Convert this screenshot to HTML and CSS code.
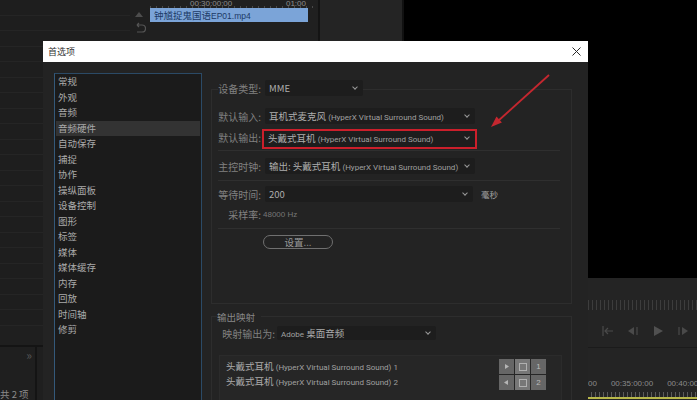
FILE: index.html
```html
<!DOCTYPE html>
<html lang="en">
<head>
    <meta charset="UTF-8">
    <meta name="viewport" content="width=device-width, initial-scale=1.0">
    <title>首选项</title>
    <link rel="stylesheet" href="styles.css">
</head>
<body>
    <div class="app">
        <div class="left-panel">
            <div class="left-top">
                <div class="rows">
                    <div class="row"></div><div class="row"></div><div class="row"></div><div class="row"></div>
                    <div class="row"></div><div class="row"></div><div class="row"></div><div class="row"></div>
                    <div class="row"></div><div class="row"></div><div class="row"></div><div class="row"></div>
                    <div class="row"></div><div class="row"></div><div class="row"></div><div class="row"></div>
                    <div class="row"></div><div class="row"></div><div class="row"></div><div class="row"></div>
                    <div class="row"></div>
                </div>
                <div class="tools">
                    <svg width="10" height="6" viewBox="0 0 10 6"><path d="M5 0L9 5H1Z" fill="#4d4d4d"/></svg>
                    <svg width="12" height="12" viewBox="0 0 12 12"><path d="M3 3h5a3 3 0 0 1 0 7H3M3 3l2-2M3 3l2 2" stroke="#555" stroke-width="1.2" fill="none"/></svg>
                </div>
            </div>
            <div class="left-foot">
                <span class="chev">»</span>
                <span class="count">共 2 项</span>
            </div>
        </div>
        <div class="timeline">
            <div class="track-area">
                <div class="time-ruler"><span>00:30:00:00</span><span>01:00</span></div>
                <div class="clip"><span>钟馗捉鬼国语</span><span class="clip-en">EP01.mp4</span></div>
            </div>
            <div class="track-side"></div>
        </div>
        <div class="monitor">
            <div class="video"></div>
            <div class="monitor-bottom">
                <div class="ticks"></div>
                <div class="transport">
                    <svg width="12" height="10" viewBox="0 0 12 10"><path d="M1 0v10M3 5h8M6 2L3 5l3 3" stroke="#4a4a4a" stroke-width="1.2" fill="none"/></svg>
                    <svg width="12" height="10" viewBox="0 0 12 10"><path d="M7 1v8L1 5Z" fill="#4a4a4a"/><path d="M10 1v8" stroke="#4a4a4a" stroke-width="1.2"/></svg>
                    <svg width="12" height="10" viewBox="0 0 12 10"><path d="M2 0v10l9-5Z" fill="#505050"/></svg>
                    <svg width="12" height="10" viewBox="0 0 12 10"><path d="M2 1v8" stroke="#4a4a4a" stroke-width="1.2"/><path d="M5 1v8l6-4Z" fill="#4a4a4a"/></svg>
                </div>
                <div class="times"><span>00</span><span>00:35:00:00</span><span>00:40:00</span></div>
                <div class="bottom-ticks"></div>
                <div class="yellow"></div>
            </div>
        </div>

        <div class="dialog">
            <div class="title-bar">
                <span>首选项</span>
                <svg width="9" height="9" viewBox="0 0 9 9"><path d="M0.5 0.5l8 8M8.5 0.5l-8 8" stroke="#2a2a2a" stroke-width="1" fill="none"/></svg>
            </div>
            <div class="dialog-body">
                <ul class="side-list">
                    <li>常规</li><li>外观</li><li>音频</li><li class="selected">音频硬件</li><li>自动保存</li>
                    <li>捕捉</li><li>协作</li><li>操纵面板</li><li>设备控制</li><li>图形</li>
                    <li>标签</li><li>媒体</li><li>媒体缓存</li><li>内存</li><li>回放</li>
                    <li>时间轴</li><li>修剪</li>
                </ul>
                <div class="content">
                    <div class="group">
                        <div class="form-row device-type">
                            <label>设备类型:</label>
                            <div class="select select-short"><span>MME</span><i class="caret"></i></div>
                        </div>
                        <div class="form-row row-input">
                            <label>默认输入:</label>
                            <div class="select"><span>耳机式麦克风 <em>(HyperX Virtual Surround Sound)</em></span><i class="caret"></i></div>
                        </div>
                        <div class="form-row row-output">
                            <label>默认输出:</label>
                            <div class="select highlighted"><span>头戴式耳机 <em>(HyperX Virtual Surround Sound)</em></span><i class="caret"></i></div>
                        </div>
                        <div class="divider divider-first"></div>
                        <div class="form-row">
                            <label>主控时钟:</label>
                            <div class="select"><span>输出: 头戴式耳机 <em>(HyperX Virtual Surround Sound)</em></span><i class="caret"></i></div>
                        </div>
                        <div class="divider"></div>
                        <div class="form-row">
                            <label>等待时间:</label>
                            <div class="select select-latency"><span>200</span><i class="caret"></i></div>
                            <span class="unit">毫秒</span>
                        </div>
                        <div class="form-row rate-row">
                            <label>采样率:</label>
                            <span class="rate">48000 Hz</span>
                        </div>
                        <div class="divider divider-last"></div>
                        <button class="settings-btn">设置...</button>
                    </div>
                    <div class="map-group">
                        <div class="map-title">输出映射</div>
                        <div class="form-row map-row">
                            <label>映射输出为:</label>
                            <div class="select select-map"><span><em>Adobe</em> 桌面音频</span><i class="caret"></i></div>
                        </div>
                        <div class="map-box">
                            <div class="map-names">
                                <div>头戴式耳机 <em>(HyperX Virtual Surround Sound) 1</em></div>
                                <div>头戴式耳机 <em>(HyperX Virtual Surround Sound) 2</em></div>
                            </div>
                            <div class="map-grid">
                                <div class="cell"><svg width="7" height="7" viewBox="0 0 7 7"><path d="M2 1v5l4-2.5Z" fill="#b5b5b5"/></svg></div>
                                <div class="cell cell-light"><b class="sq"></b></div>
                                <div class="cell">1</div>
                                <div class="cell"><svg width="7" height="7" viewBox="0 0 7 7"><path d="M5 1v5L1 3.500Z" fill="#b5b5b5"/></svg></div>
                                <div class="cell cell-light"><b class="sq"></b></div>
                                <div class="cell">2</div>
                            </div>
                        </div>
                    </div>
                </div>
            </div>
        </div>

        <svg class="arrow" width="70" height="62" viewBox="0 0 70 62">
            <path d="M64 5L13 51" stroke="#c4272f" stroke-width="1.8" fill="none"/>
            <path d="M6 57L11.500 46.600L16.900 52.600Z" fill="#c4272f"/>
        </svg>
    </div>
</body>
</html>
```

FILE: styles.css
```css
* {
    box-sizing: border-box;
}
body {
    margin: 0;
    background-color: #000;
    font-family: "Noto Sans CJK SC", "Liberation Sans", sans-serif;
}
.app {
    position: relative;
    width: 697px;
    height: 400px;
    overflow: hidden;
    display: grid;
    grid-template-columns: 150px 254px 293px;
    background-color: #000;
}

/* panels behind the dialog */
.left-panel {
    background-color: #1f1f1f;
    display: flex;
    flex-direction: column;
}
.left-top {
    height: 347px;
    display: flex;
    border-bottom: 2px solid #141414;
}
.rows {
    width: 130px;
    height: 328px;
    overflow: hidden;
}
.row {
    height: 15.5px;
    border-bottom: 1px solid #252525;
    background-color: #1e1e1e;
}
.tools {
    flex: 1;
    display: flex;
    flex-direction: column;
    align-items: flex-start;
    gap: 4px;
    padding-top: 12px;
    padding-left: 4px;
}
.left-foot {
    flex: 1;
    width: 37px;
    border-right: 2px solid #141414;
    display: flex;
    flex-direction: column;
    justify-content: space-between;
    color: #8a8a8a;
    font-size: 9.5px;
    white-space: nowrap;
}
.chev {
    align-self: flex-end;
    padding-right: 3px;
    font-size: 12px;
    line-height: 16px;
    color: #555;
}
.count {
    line-height: 12px;
}
.timeline {
    display: flex;
    border-right: 2px solid #111;
    background-color: #202020;
}
.track-area {
    width: 170px;
    border-right: 2px solid #141414;
}
.track-side {
    flex: 1;
    background-color: #242424;
}
.time-ruler {
    height: 8px;
    display: flex;
    justify-content: space-between;
    padding: 0 12px 0 40px;
    font: 8px/7px "Liberation Sans", sans-serif;
    color: #8c8c8c;
    background: repeating-linear-gradient(90deg, #4a4a4a 0 1px, transparent 1px 6px) 0 6px / 100% 2px no-repeat;
}
.clip {
    width: 158px;
    height: 14px;
    background-color: #7ba4d8;
    color: #1c3a66;
    font-size: 9.5px;
    line-height: 14px;
    padding-left: 4px;
    white-space: nowrap;
}
.clip-en {
    font: 8.5px "Liberation Sans", sans-serif;
}
.monitor {
    display: flex;
    flex-direction: column;
}
.video {
    height: 278px;
    background-color: #000;
}
.monitor-bottom {
    flex: 1;
    background-color: #242424;
    display: flex;
    flex-direction: column;
}
.ticks {
    height: 10px;
    margin-top: 22px;
    background: repeating-linear-gradient(90deg, #3d3d3d 0 1px, transparent 1px 4px);
}
.transport {
    height: 38px;
    padding: 4px 0 0 198px;
    display: flex;
    gap: 13px;
    align-items: center;
    border-bottom: 1px solid #1b1b1b;
}
.times {
    height: 13px;
    margin-top: 29px;
    padding-left: 184px;
    display: flex;
    gap: 14px;
    font: 8px/13px "Liberation Sans", sans-serif;
    color: #8b8b8b;
    white-space: nowrap;
}
.bottom-ticks {
    height: 5px;
    margin: 2px 0 0 183px;
    background: repeating-linear-gradient(90deg, #5a5a5a 0 1px, transparent 1px 4px);
}
.yellow {
    height: 2px;
    margin-left: 183px;
    background-color: #b8b84a;
}

/* dialog floats over the panels */
.dialog {
    position: absolute;
    left: 43px;
    top: 41px;
    width: 545px;
    height: 359px;
    background-color: #232323;
}
.title-bar {
    height: 21px;
    background-color: #fff;
    color: #333;
    font-size: 9px;
    display: flex;
    align-items: center;
    justify-content: space-between;
    padding: 0 7px 0 5px;
}
.dialog-body {
    display: flex;
    padding: 11px 16px 0 11px;
    gap: 9px;
}
.side-list {
    list-style: none;
    margin: 0;
    padding: 0 1px;
    width: 148px;
    height: 330px;
    background-color: #1b1b1b;
    border: 1px solid #2b4a66;
    border-left-color: #34597a;
    color: #aaa;
    font-size: 9.5px;
}
.side-list li {
    height: 15.5px;
    line-height: 15.5px;
    padding-left: 2px;
}
.side-list li.selected {
    background-color: #333;
}
.content {
    flex: 1;
    padding-top: 16px;
    font-size: 9.5px;
    color: #9a9a9a;
}
.group {
    height: 215px;
    border: 1px solid #2d2d2d;
    padding: 0 11px 0 6px;
}
.form-row {
    display: flex;
    align-items: center;
    height: 18px;
}
.form-row label {
    width: 43px;
    white-space: nowrap;
    text-align: right;
    color: #808080;
    font-size: 10px;
    margin-right: 4px;
}
.device-type {
    margin-top: -11px;
    width: fit-content;
    background-color: #232323;
}
.row-input {
    margin-top: 10px;
}
.row-output {
    margin-top: 4px;
    height: 20px;
    padding-bottom: 3px;
}
.select {
    width: 210px;
    height: 16px;
    background-color: #1d1d1d;
    color: #adadad;
    display: flex;
    align-items: center;
    justify-content: space-between;
    padding: 0 6px 0 4px;
    white-space: nowrap;
    border-radius: 2px;
}
.select-short {
    width: 98px;
}
.select-latency {
    width: 208px;
}
.select em,
.map-names em {
    font: normal 8px Roboto, "Liberation Sans", sans-serif;
    color: #a0a0a0;
}
.caret {
    width: 4px;
    height: 4px;
    border-right: 1px solid #999;
    border-bottom: 1px solid #999;
    transform: rotate(45deg);
    margin-top: -2px;
}
.highlighted {
    height: 20px;
    width: 215px;
    border: 2px solid #cb1f2b;
    border-radius: 0;
    margin: 0 0 -3px -3px;
    padding: 0 6px 3px 4px;
}
.divider {
    height: 1px;
    background-color: #2f2f2f;
    margin: 5px 0 4px;
}
.divider-first {
    margin: 1px 0 6px;
}
.divider-last {
    margin: 5px 0 6px;
}
.unit {
    margin-left: 8px;
    font-size: 8.5px;
    color: #a0a0a0;
}
.rate-row {
    margin-top: 2px;
}
.rate {
    margin-left: -2px;
    color: #777;
    font: 8px "Liberation Sans", sans-serif;
}
.settings-btn {
    display: block;
    margin-left: 45px;
    width: 70px;
    height: 14px;
    padding: 0;
    background-color: transparent;
    border: 1px solid #707070;
    border-radius: 7px;
    color: #999;
    font-family: inherit;
    font-size: 9.5px;
    line-height: 12px;
}
.map-group {
    margin-top: 12px;
    height: 100px;
    border: 1px solid #2d2d2d;
    padding: 0 9px 0 7px;
}
.map-title {
    width: fit-content;
    height: 10px;
    margin: -5px 0 0 -2px;
    padding: 0 6px 0 0;
    background-color: #232323;
    color: #888;
    font-size: 9.5px;
    line-height: 10px;
}
.map-row {
    margin-top: 2px;
    padding-left: 3px;
}
.map-row label {
    width: 53px;
    margin-right: 2px;
}
.select-map {
    width: 159px;
    height: 14px;
}
.map-box {
    margin-top: 13px;
    height: 60px;
    background-color: #262626;
    border: 1px solid #2b2b2b;
    display: flex;
    justify-content: space-between;
    padding: 3px 15px 0 6px;
    color: #aaa;
}
.map-names div {
    height: 15px;
    line-height: 15px;
    white-space: nowrap;
}
.map-grid {
    display: grid;
    grid-template-columns: repeat(3, 15px);
    grid-auto-rows: 15px;
    gap: 1px;
}
.cell {
    background-color: #666;
    color: #bbb;
    font: 8px "Liberation Sans", sans-serif;
    display: flex;
    align-items: center;
    justify-content: center;
}
.cell-light {
    background-color: #777;
}
.sq {
    width: 8px;
    height: 8px;
    border: 1px solid #b0b0b0;
}
.arrow {
    position: absolute;
    left: 485px;
    top: 70px;
}
```
